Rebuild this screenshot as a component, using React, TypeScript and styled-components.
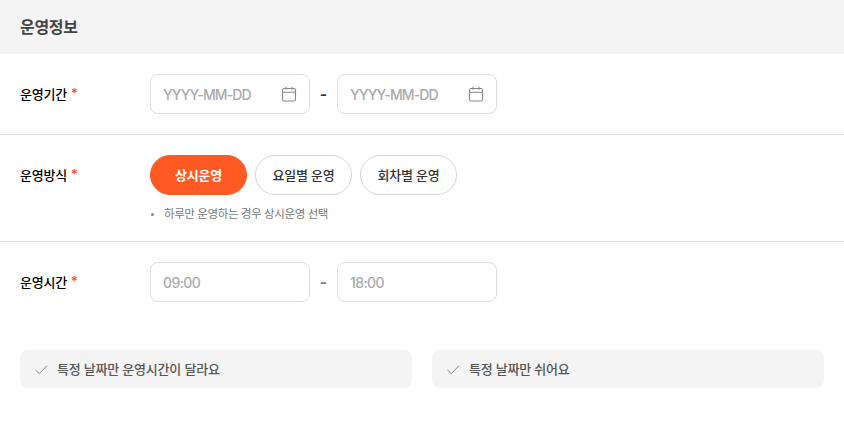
import React from "react";
import styled, { createGlobalStyle } from "styled-components";

const Global = createGlobalStyle`
  html, body { margin: 0; padding: 0; background: #fff; }
  body { font-family: Inter, "Noto Sans CJK KR", sans-serif; }
`;

const Page = styled.div`
  width: 844px;
  height: 424px;
  overflow: hidden;
  background: #fff;
`;

const Header = styled.div`
  box-sizing: border-box;
  height: 54px;
  display: flex;
  align-items: center;
  padding: 0 20px 2px;
  background: #f4f4f4;
  color: #444;
  font-size: 16px;
  font-weight: 700;
  letter-spacing: -0.3px;
`;

const Row = styled.div<{ $height: number; $border?: boolean }>`
  display: flex;
  align-items: flex-start;
  box-sizing: border-box;
  height: ${(p) => p.$height}px;
  padding: 20px 20px 0;
  border-bottom: ${(p) => (p.$border ? "1px solid #ddd" : "none")};
`;

const Label = styled.div`
  box-sizing: border-box;
  width: 130px;
  height: 40px;
  padding-bottom: 2px;
  display: flex;
  align-items: center;
  gap: 4px;
  flex: none;
  color: #000;
  font-size: 13px;
  font-weight: 500;
  letter-spacing: -0.25px;
`;

const Star = styled.span`
  color: #ff5a24;
  font-weight: 700;
`;

const Range = styled.div`
  display: flex;
  align-items: center;
`;

const Field = styled.div`
  box-sizing: border-box;
  width: 160px;
  height: 40px;
  display: flex;
  align-items: center;
  justify-content: space-between;
  padding: 0 12px;
  border: 1px solid #ddd;
  border-radius: 8px;
  color: #aaa;
  font-size: 14px;
  font-weight: 500;
  letter-spacing: -0.6px;
`;

const DateText = styled.span`
  letter-spacing: -0.9px;
`;

const Dash = styled.span<{ $dark?: boolean }>`
  width: 27px;
  text-align: center;
  color: ${(p) => (p.$dark ? "#333" : "#777")};
  font-size: 16px;
  font-weight: 600;
`;

const Pills = styled.div`
  display: flex;
  gap: 8px;
`;

const Pill = styled.div<{ $active?: boolean }>`
  box-sizing: border-box;
  width: 97px;
  height: 40px;
  padding-bottom: 2px;
  display: flex;
  align-items: center;
  justify-content: center;
  border-radius: 20px;
  border: 1px solid ${(p) => (p.$active ? "#ff5a24" : "#d5d5dc")};
  background: ${(p) => (p.$active ? "#ff5a24" : "#fff")};
  color: ${(p) => (p.$active ? "#fff" : "#333")};
  font-size: 13px;
  font-weight: ${(p) => (p.$active ? 700 : 500)};
  letter-spacing: -0.2px;
`;

const Note = styled.div`
  display: flex;
  align-items: center;
  gap: 10px;
  margin-top: 11px;
  padding-left: 1px;
  color: #777;
  font-size: 11.5px;
  line-height: 16px;
  letter-spacing: -0.4px;
`;

const Bullet = styled.span`
  width: 3px;
  height: 3px;
  border-radius: 50%;
  background: #888;
`;

const Options = styled.div`
  display: flex;
  gap: 20px;
  padding: 48px 20px 0;
`;

const Option = styled.div`
  box-sizing: border-box;
  flex: 1;
  height: 38px;
  display: flex;
  align-items: center;
  gap: 8px;
  padding: 0 14px 2px;
  border-radius: 8px;
  background: #f4f4f4;
  color: #555;
  font-size: 13px;
  font-weight: 500;
  letter-spacing: -0.2px;
`;

const IconCheck = styled.svg`
  margin-top: 2px;
  flex: none;
`;

const DateIcon = () => (
  <svg width="16" height="16" viewBox="0 0 16 16" fill="none" stroke="#888" strokeWidth="1.1">
    <rect x="1.5" y="2.5" width="13" height="12.5" rx="1.5" />
    <path d="M1.5 6.2h13M5 .8v3M11 .8v3" />
  </svg>
);

const CheckIcon = () => (
  <IconCheck width="15" height="15" viewBox="0 0 15 15" fill="none" stroke="#8a8a8a" strokeWidth="1">
    <path d="M1.5 8l3.8 3.6L13 3.8" />
  </IconCheck>
);

export default function App() {
  return (
    <Page>
      <Global />
      <Header>운영정보</Header>
      <Row $height={81} $border>
        <Label>운영기간 <Star>*</Star></Label>
        <Range>
          <Field><DateText>YYYY-MM-DD</DateText><DateIcon /></Field>
          <Dash $dark>-</Dash>
          <Field><DateText>YYYY-MM-DD</DateText><DateIcon /></Field>
        </Range>
      </Row>
      <Row $height={107} $border>
        <Label>운영방식 <Star>*</Star></Label>
        <div>
          <Pills>
            <Pill $active>상시운영</Pill>
            <Pill>요일별 운영</Pill>
            <Pill>회차별 운영</Pill>
          </Pills>
          <Note><Bullet />하루만 운영하는 경우 상시운영 선택</Note>
        </div>
      </Row>
      <Row $height={60}>
        <Label>운영시간 <Star>*</Star></Label>
        <Range>
          <Field>09:00</Field>
          <Dash>-</Dash>
          <Field>18:00</Field>
        </Range>
      </Row>
      <Options>
        <Option><CheckIcon />특정 날짜만 운영시간이 달라요</Option>
        <Option><CheckIcon />특정 날짜만 쉬어요</Option>
      </Options>
    </Page>
  );
}
